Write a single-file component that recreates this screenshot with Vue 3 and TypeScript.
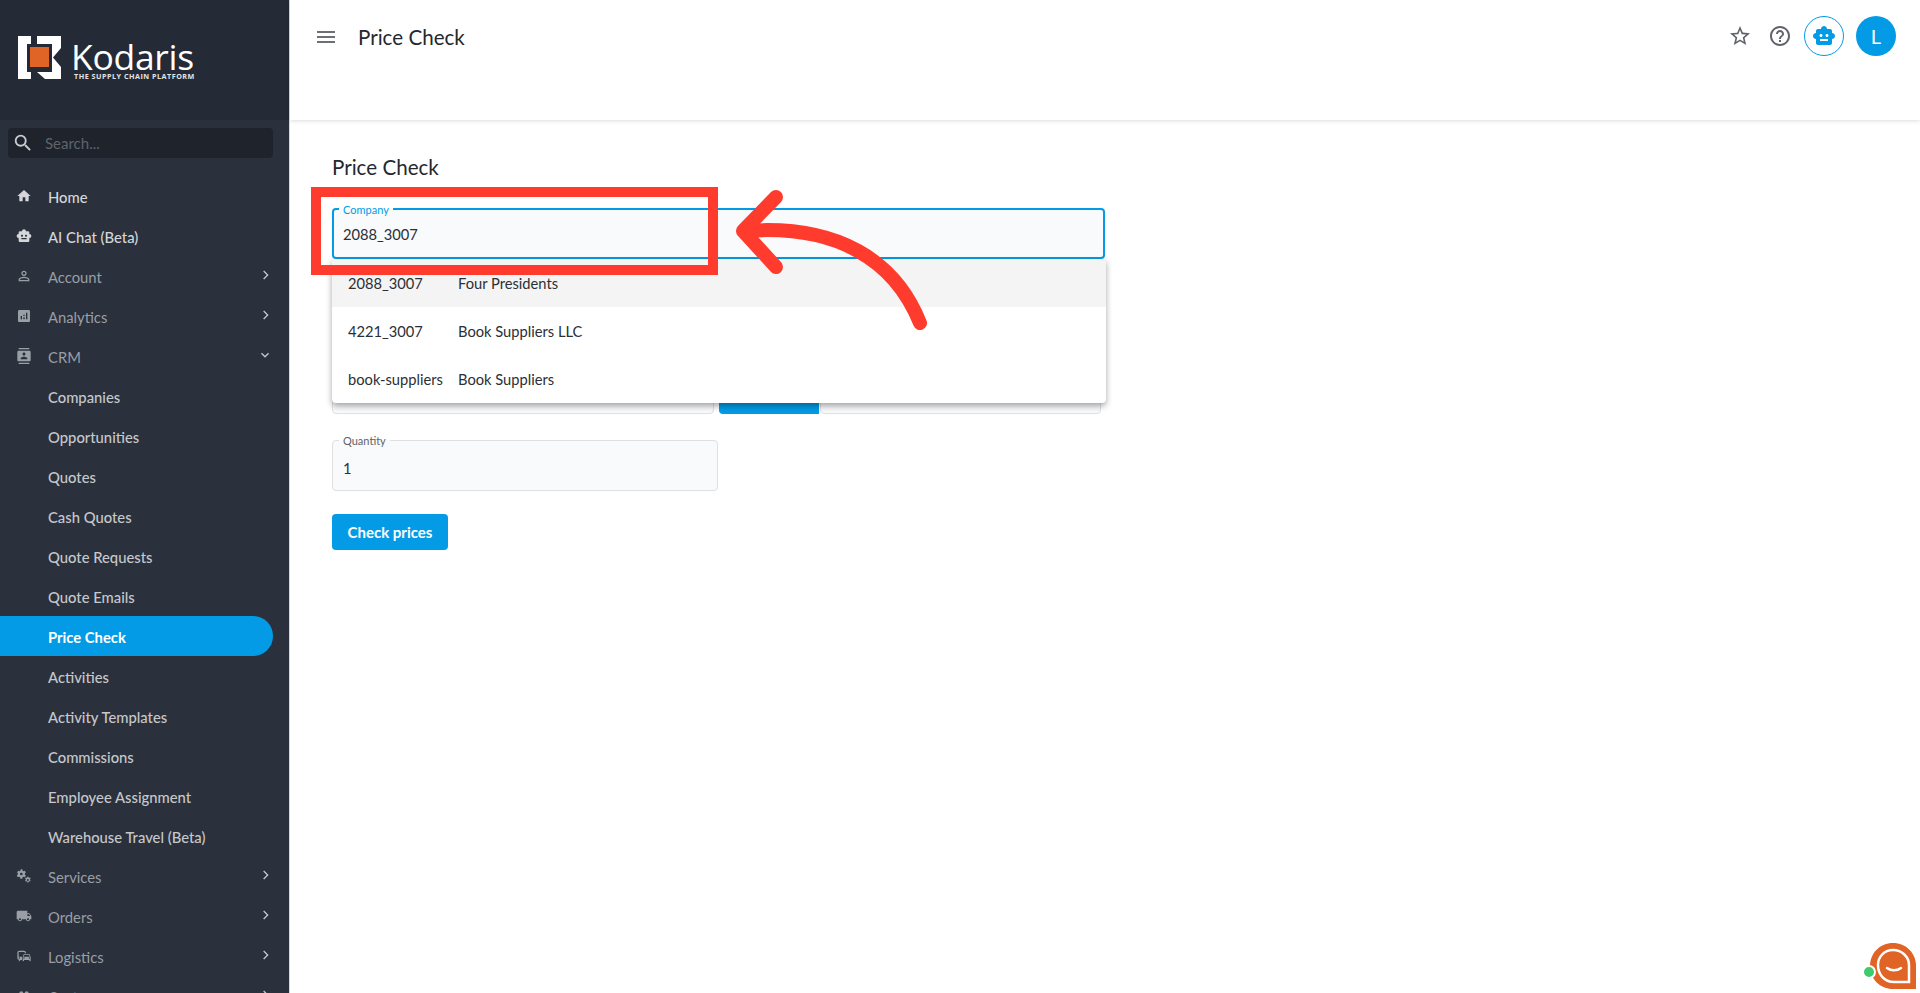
<script setup lang="ts">
interface NavItem {
  label: string
  icon?: string
  chevron?: 'right' | 'down'
  tone?: 'top' | 'group' | 'sub' | 'active'
}

const icons: Record<string, string> = {
  home: 'M10 20v-6h4v6h5v-8h3L12 3 2 12h3v8z',
  bot: 'M20 9V7c0-1.1-.9-2-2-2h-3c0-1.66-1.34-3-3-3S9 3.34 9 5H6c-1.1 0-2 .9-2 2v2c-1.66 0-3 1.34-3 3s1.34 3 3 3v4c0 1.1.9 2 2 2h12c1.1 0 2-.9 2-2v-4c1.66 0 3-1.34 3-3s-1.34-3-3-3zM7.5 11.5c0-.83.67-1.5 1.5-1.5s1.5.67 1.5 1.5S9.83 13 9 13s-1.5-.67-1.5-1.5zM16 17H8v-2h8v2zm-1-4c-.83 0-1.5-.67-1.5-1.5S14.17 10 15 10s1.5.67 1.5 1.5S15.83 13 15 13z',
  person: 'M12 5.9c1.16 0 2.1.94 2.1 2.1s-.94 2.1-2.1 2.1S9.9 9.16 9.9 8s.94-2.1 2.1-2.1m0 9c2.97 0 6.1 1.46 6.1 2.1v1.1H5.9V17c0-.64 3.13-2.1 6.1-2.1M12 4C9.79 4 8 5.79 8 8s1.79 4 4 4 4-1.79 4-4-1.79-4-4-4zm0 9c-2.67 0-8 1.34-8 4v3h16v-3c0-2.66-5.33-4-8-4z',
  analytics: 'M19 3H5c-1.1 0-2 .9-2 2v14c0 1.1.9 2 2 2h14c1.1 0 2-.9 2-2V5c0-1.1-.9-2-2-2zM9 17H7v-5h2v5zm4 0h-2v-3h2v3zm0-5h-2v-2h2v2zm4 5h-2V7h2v10z',
  contacts: 'M20 0H4v2h16V0zM4 24h16v-2H4v2zM20 4H4c-1.1 0-2 .9-2 2v12c0 1.1.9 2 2 2h16c1.1 0 2-.9 2-2V6c0-1.1-.9-2-2-2zm-8 2.75c1.24 0 2.25 1.01 2.25 2.25s-1.01 2.25-2.25 2.25S9.75 10.24 9.75 9 10.76 6.75 12 6.75zM17 17H7v-1.5c0-1.67 3.33-2.5 5-2.5s5 .83 5 2.5V17z',
  services: 'M9.5 2l.4 2.1c.5.2 1 .5 1.4.8l2-.7 1.5 2.6-1.6 1.4c.1.5.1 1.1 0 1.6l1.6 1.4-1.5 2.6-2-.7c-.4.3-.9.6-1.4.8L9.5 16h-3l-.4-2.1c-.5-.2-1-.5-1.4-.8l-2 .7-1.5-2.6 1.6-1.4c-.1-.5-.1-1.1 0-1.6L1.7 6.8l1.5-2.6 2 .7c.4-.3.9-.6 1.4-.8L7 2zM8 7a2 2 0 100 4 2 2 0 000-4zM18.7 13l.3 1.3.9.5 1.2-.4.9 1.5-1 .9v1.1l1 .9-.9 1.5-1.2-.4-.9.5-.3 1.3h-1.8l-.3-1.3-.9-.5-1.2.4-.9-1.5 1-.9v-1.1l-1-.9.9-1.5 1.2.4.9-.5.3-1.3zm-.9 3.6a1.4 1.4 0 100 2.8 1.4 1.4 0 000-2.8z',
  truck: 'M20 8h-3V4H3c-1.1 0-2 .9-2 2v11h2c0 1.66 1.34 3 3 3s3-1.34 3-3h6c0 1.66 1.34 3 3 3s3-1.34 3-3h2v-5l-3-4zM6 18.5c-.83 0-1.5-.67-1.5-1.5s.67-1.5 1.5-1.5 1.5.67 1.5 1.5-.67 1.5-1.5 1.5zm13.5-9l1.96 2.5H17V9.5h2.5zm-1.5 9c-.83 0-1.5-.67-1.5-1.5s.67-1.5 1.5-1.5 1.5.67 1.5 1.5-.67 1.5-1.5 1.5z',
  commute: 'M12 4H5C3.34 4 2 5.34 2 7v8c0 1.66 1.34 3 3 3l-1 1v1h1l2-2h2v-5H4V6h9v2h2V7c0-1.66-1.34-3-3-3zM5 14c.55 0 1 .45 1 1s-.45 1-1 1-1-.45-1-1 .45-1 1-1zm15.57-4.34c-.14-.4-.52-.66-.97-.66h-7.19c-.46 0-.83.26-.98.66L10 13.77l.01 5.51c0 .38.31.72.69.72h.62c.38 0 .68-.38.68-.76V18h8v1.24c0 .38.31.76.69.76h.61c.38 0 .69-.34.69-.72l.01-1.37v-4.14l-1.43-4.07zm-8.16.34h7.19l1.03 3h-9.25l1.03-3zM12 16c-.55 0-1-.45-1-1s.45-1 1-1 1 .45 1 1-.45 1-1 1zm8 0c-.55 0-1-.45-1-1s.45-1 1-1 1 .45 1 1-.45 1-1 1z',
  people: 'M16 11c1.66 0 2.99-1.34 2.99-3S17.66 5 16 5c-1.66 0-3 1.34-3 3s1.34 3 3 3zm-8 0c1.66 0 2.99-1.34 2.99-3S9.66 5 8 5C6.34 5 5 6.34 5 8s1.34 3 3 3zm0 2c-2.33 0-7 1.17-7 3.5V19h14v-2.5c0-2.33-4.67-3.5-7-3.5zm8 0c-.29 0-.62.02-.97.05 1.16.84 1.97 1.97 1.97 3.45V19h6v-2.5c0-2.33-4.67-3.5-7-3.5z'
}

const nav: NavItem[] = [
  { label: 'Home', icon: 'home', tone: 'top' },
  { label: 'AI Chat (Beta)', icon: 'bot', tone: 'top' },
  { label: 'Account', icon: 'person', chevron: 'right', tone: 'group' },
  { label: 'Analytics', icon: 'analytics', chevron: 'right', tone: 'group' },
  { label: 'CRM', icon: 'contacts', chevron: 'down', tone: 'group' },
  { label: 'Companies', tone: 'sub' },
  { label: 'Opportunities', tone: 'sub' },
  { label: 'Quotes', tone: 'sub' },
  { label: 'Cash Quotes', tone: 'sub' },
  { label: 'Quote Requests', tone: 'sub' },
  { label: 'Quote Emails', tone: 'sub' },
  { label: 'Price Check', tone: 'active' },
  { label: 'Activities', tone: 'sub' },
  { label: 'Activity Templates', tone: 'sub' },
  { label: 'Commissions', tone: 'sub' },
  { label: 'Employee Assignment', tone: 'sub' },
  { label: 'Warehouse Travel (Beta)', tone: 'sub' },
  { label: 'Services', icon: 'services', chevron: 'right', tone: 'group' },
  { label: 'Orders', icon: 'truck', chevron: 'right', tone: 'group' },
  { label: 'Logistics', icon: 'commute', chevron: 'right', tone: 'group' },
  { label: 'Customers', icon: 'people', chevron: 'right', tone: 'group' }
]

const options = [
  { code: '2088_3007', name: 'Four Presidents' },
  { code: '4221_3007', name: 'Book Suppliers LLC' },
  { code: 'book-suppliers', name: 'Book Suppliers' }
]
</script>

<template>
  <div class="app">
    <aside class="sidebar">
      <div class="brand">
        <svg class="mark" viewBox="0 0 43 43" width="43" height="43">
          <path fill="#fff" d="M0 0h13v8H9v28h4v7H0z" />
          <path fill="#fff" d="M19 0h24v12l-8 9.500 8 9.500v12H27l-8-7h15V8H19z" />
          <rect x="12" y="11" width="19" height="20" fill="#df6426" />
        </svg>
        <div class="brand-text">
          <span class="brand-name">Kodaris</span>
          <span class="brand-tag">THE SUPPLY CHAIN PLATFORM</span>
        </div>
      </div>
      <div class="search">
        <svg viewBox="0 0 24 24" width="22" height="22"><path fill="#c9ccd1" d="M15.500 14h-.79l-.28-.27A6.470 6.470 0 0016 9.500 6.500 6.500 0 109.500 16c1.610 0 3.090-.59 4.230-1.570l.27.28v.79l5 4.990L20.490 19l-4.990-5zm-6 0C7.010 14 5 11.990 5 9.500S7.010 5 9.500 5 14 7.010 14 9.500 11.990 14 9.500 14z" /></svg>
        <span>Search...</span>
      </div>
      <nav class="nav">
        <div v-for="item in nav" :key="item.label" class="nav-item" :class="item.tone">
          <svg v-if="item.icon" class="nav-icon" viewBox="0 0 24 24" width="16" height="16"><path fill="currentColor" :d="icons[item.icon]" /></svg>
          <span class="nav-label">{{ item.label }}</span>
          <svg v-if="item.chevron === 'right'" class="chev" viewBox="0 0 24 24" width="16" height="16"><path fill="#c4c7cc" d="M9.290 6.710L10.700 5.300 17.400 12l-6.700 6.700-1.410-1.410L14.580 12z" /></svg>
          <svg v-if="item.chevron === 'down'" class="chev" viewBox="0 0 24 24" width="16" height="16"><path fill="#c4c7cc" d="M7.410 8.590L12 13.170l4.590-4.580L18 10l-6 6-6-6z" /></svg>
        </div>
      </nav>
    </aside>

    <div class="main">
      <header class="topbar">
        <svg class="menu" viewBox="0 0 24 24" width="24" height="24"><path fill="#6c6f76" d="M3 18h18v-2H3v2zm0-5h18v-2H3v2zm0-7v2h18V6H3z" /></svg>
        <span class="top-title">Price Check</span>
        <div class="top-actions">
          <svg viewBox="0 0 24 24" width="24" height="24"><path fill="#60636a" d="M22 9.240l-7.190-.62L12 2 9.190 8.630 2 9.240l5.460 4.730L5.820 21 12 17.270 18.180 21l-1.630-7.030L22 9.240zM12 15.400l-3.760 2.270 1-4.280-3.320-2.880 4.380-.38L12 6.100l1.710 4.040 4.380.38-3.320 2.880 1 4.280L12 15.400z" /></svg>
          <svg viewBox="0 0 24 24" width="24" height="24"><path fill="#60636a" d="M11 18h2v-2h-2v2zm1-16C6.480 2 2 6.480 2 12s4.480 10 10 10 10-4.480 10-10S17.520 2 12 2zm0 18c-4.410 0-8-3.590-8-8s3.590-8 8-8 8 3.590 8 8-3.590 8-8 8zm0-14c-2.210 0-4 1.790-4 4h2c0-1.100.9-2 2-2s2 .9 2 2c0 2-3 1.750-3 5h2c0-2.250 3-2.500 3-5 0-2.210-1.790-4-4-4z" /></svg>
          <div class="bot-btn">
            <svg viewBox="0 0 24 24" width="24" height="24"><path fill="#039be5" :d="icons.bot" /></svg>
          </div>
          <div class="avatar">L</div>
        </div>
      </header>

      <main class="content">
        <h1 class="heading">Price Check</h1>
        <div class="field focused company">
          <span class="legend">Company</span>
          <span class="value">2088_3007</span>
          <div class="dropdown">
            <div v-for="(opt, i) in options" :key="opt.code" class="option" :class="{ hover: i === 0 }">
              <span class="code">{{ opt.code }}</span>
              <span>{{ opt.name }}</span>
            </div>
          </div>
        </div>
        <div class="under-row">
          <div class="under-field"></div>
          <div class="under-btn"></div>
          <div class="under-field wide"></div>
        </div>
        <div class="field quantity">
          <span class="legend">Quantity</span>
          <span class="value">1</span>
        </div>
        <button class="check">Check prices</button>
      </main>
    </div>

    <div class="highlight"></div>
    <svg class="arrow" viewBox="0 0 220 150" width="220" height="150">
      <path d="M193 123C168 60 110 24 18 31" fill="none" stroke="#ff3b2d" stroke-width="14" stroke-linecap="round" />
      <path d="M49 -3L16 31 49 67" fill="none" stroke="#ff3b2d" stroke-width="14" stroke-linecap="round" stroke-linejoin="round" />
    </svg>

    <div class="chat">
      <svg viewBox="0 0 46 46" width="46" height="46">
        <path fill="#df6426" d="M23 0C36 0 46 10 46 23V46H23C10 46 0 36 0 23 0 10 10 0 23 0z" />
        <path fill="none" stroke="#fff" stroke-width="2.500" d="M23 7C32 7 39 14 39 22V39H24C14 39 8 31 8 22 8 14 14 7 23 7z" />
        <path fill="none" stroke="#fff" stroke-width="2.500" stroke-linecap="round" d="M17 25c4 3 10 3 14 0" />
      </svg>
      <span class="dot"></span>
    </div>
  </div>
</template>

<style>
html, body { margin: 0; overflow: hidden; }
</style>

<style scoped>
.app {
  position: relative;
  display: flex;
  width: 1920px;
  height: 993px;
  overflow: hidden;
  background: #fff;
  font-family: Lato, "Noto Sans", sans-serif;
  color: #2b2f36;
}
.sidebar {
  width: 289px;
  flex: none;
  background: #2b313c;
  border-right: 1px solid #d8d9db;
  overflow: hidden;
}
.brand {
  height: 120px;
  box-sizing: border-box;
  background: #252b36;
  display: flex;
  align-items: flex-start;
  padding: 36px 0 0 18px;
  gap: 10px;
}
.mark { flex: none; }
.brand-text { display: flex; flex-direction: column; color: #fff; margin-top: 5px; }
.brand-name { font-family: "Open Sans", sans-serif; font-size: 35.500px; line-height: 30px; letter-spacing: -0.3px; font-weight: 500; }
.brand-tag { font-family: "Open Sans", sans-serif; font-size: 7.200px; line-height: 9px; font-weight: 700; letter-spacing: 0.5px; color: #e3e4e6; margin: 1px 0 0 3px; }
.search {
  margin: 8px 16px 0 8px;
  height: 30px;
  background: #1e232c;
  border-radius: 4px;
  display: flex;
  align-items: center;
  padding-left: 4px;
  gap: 11px;
  color: #5f636b;
  font-size: 15px;
}
.nav { margin-top: 18px; }
.nav-item {
  position: relative;
  height: 40px;
  display: flex;
  align-items: center;
  padding-left: 48px;
  margin-right: 16px;
  font-size: 14.800px;
  font-weight: 500;
}
.nav-label { padding-top: 1px; }
.nav-icon { position: absolute; left: 16px; top: 12px; }
.chev { position: absolute; right: 0; top: 11px; }
.top { color: #d4d6d9; }
.group { color: #9a9ea5; font-weight: 400; }
.sub { color: #c6c8cc; }
.active {
  color: #fff;
  font-weight: 700;
  background: #039be5;
  border-radius: 0 20px 20px 0;
}
.main { flex: 1; min-width: 0; display: flex; flex-direction: column; }
.topbar {
  height: 120px;
  flex: none;
  box-sizing: border-box;
  position: relative;
  display: flex;
  align-items: flex-start;
  padding: 25px 24px 0 24px;
  box-shadow: 0 1px 4px rgba(0, 0, 0, 0.14);
}
.top-title { margin-left: 20px; font-size: 20.600px; line-height: 24px; color: #25282e; }
.top-actions { margin-left: auto; display: flex; align-items: center; gap: 16px; margin-top: -9px; }
.top-actions > svg { width: 24px; height: 24px; }
.bot-btn {
  width: 40px;
  height: 40px;
  box-sizing: border-box;
  border: 1px solid #039be5;
  border-radius: 50%;
  display: flex;
  align-items: center;
  justify-content: center;
  margin-left: -4px;
}
.avatar {
  width: 40px;
  height: 40px;
  border-radius: 50%;
  background: #039be5;
  color: #fff;
  display: flex;
  align-items: center;
  justify-content: center;
  font-size: 20px;
  margin-left: -4px;
}
.content { padding: 33px 0 0 42px; display: flex; flex-direction: column; align-items: flex-start; }
.heading { margin: 0; font-size: 20.600px; font-weight: 400; line-height: 28px; color: #25282e; }
.field {
  position: relative;
  box-sizing: border-box;
  background: #f9fafc;
  border: 1px solid #dfe0e2;
  border-radius: 4px;
  display: flex;
  align-items: center;
  padding: 4px 10px 0;
  font-size: 14.700px;
  color: #2b2f36;
}
.legend {
  position: absolute;
  left: 6px;
  top: -7px;
  padding: 0 4px;
  background: linear-gradient(#fff 50%, #f9fafc 50%);
  font-size: 11px;
  line-height: 13px;
  color: #5f6368;
}
.company {
  width: 773px;
  height: 51px;
  margin-top: 27px;
  border: 2px solid #039be5;
  padding-left: 9px;
  padding-top: 1px;
}
.company .legend { color: #039be5; left: 5px; top: -7px; }
.dropdown {
  position: absolute;
  left: -2px;
  right: -3px;
  top: 49px;
  z-index: 2;
  background: #fff;
  border-radius: 0 0 4px 4px;
  box-shadow: 0 3px 6px rgba(0, 0, 0, 0.35);
}
.option { height: 48px; display: flex; align-items: center; padding-left: 16px; }
.option.hover { background: #f4f4f4; }
.code { width: 110px; }
.under-row { display: flex; align-items: flex-end; height: 50px; margin-top: 105px; width: 770px; }
.under-field { width: 382px; height: 50px; box-sizing: border-box; background: #f9fafc; border: 1px solid #dfe0e2; border-radius: 4px; }
.under-btn { width: 100px; height: 50px; margin-left: 5px; background: #039be5; border-radius: 4px 0 0 4px; }
.under-field.wide { width: 281px; margin-left: 1px; }
.quantity { width: 386px; height: 51px; margin-top: 26px; }
.check {
  margin-top: 23px;
  width: 116px;
  height: 36px;
  border: 0;
  border-radius: 4px;
  background: #039be5;
  color: #fff;
  font-family: inherit;
  font-size: 15px;
  font-weight: 700;
  padding: 0;
}
.highlight {
  position: absolute;
  left: 311px;
  top: 187px;
  width: 407px;
  height: 88px;
  box-sizing: border-box;
  border: 10px solid #ff3b2d;
  z-index: 3;
}
.arrow {
  position: absolute;
  left: 727px;
  top: 200px;
  z-index: 3;
  overflow: visible;
}
.chat { position: absolute; left: 1870px; top: 943px; width: 46px; height: 46px; }
.chat svg { display: block; }
.dot {
  position: absolute;
  left: -8px;
  top: 22px;
  width: 10px;
  height: 10px;
  border-radius: 50%;
  background: #3ecb6e;
  border: 2px solid #fff;
}
</style>
